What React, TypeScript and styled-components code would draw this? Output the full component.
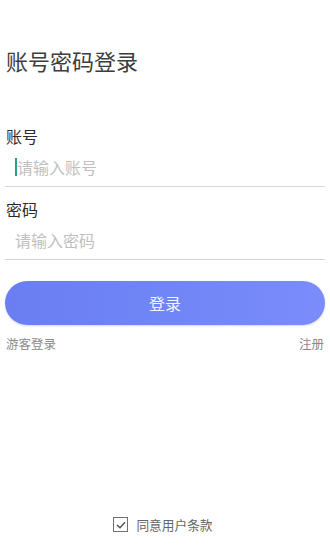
import React, { useState } from 'react'
import styled, { createGlobalStyle } from 'styled-components'

const GlobalStyle = createGlobalStyle`
    html, body {
        margin: 0;
        padding: 0;
        background: #ffffff;
    }
    body {
        font-family: "Noto Sans CJK SC", "Noto Sans", sans-serif;
    }
`

const Page = styled.div`
    display: flex;
    flex-direction: column;
    height: 550px;
    padding: 0 5px;
    box-sizing: border-box;
`

const Title = styled.h1`
    margin: 44px 0 0 1px;
    font-size: 22px;
    line-height: 32px;
    font-weight: 400;
    color: #3d3d3d;
`

const Form = styled.div`
    display: flex;
    flex-direction: column;
    margin-top: 49px;
`

const Field = styled.div`
    display: flex;
    flex-direction: column;
    border-bottom: 1px solid #d6d6d6;
    margin-bottom: 11px;
`

const Label = styled.label`
    font-size: 16px;
    line-height: 22px;
    color: #2b2b2b;
    padding-left: 1px;
`

const InputRow = styled.div`
    display: flex;
    align-items: center;
    height: 39px;
    padding-left: 10px;
`

const Cursor = styled.span`
    width: 2px;
    height: 18px;
    background: #2e9c8c;
`

const Input = styled.input`
    flex: 1;
    border: none;
    outline: none;
    background: transparent;
    padding: 0;
    font-family: inherit;
    font-size: 16px;
    color: #333;

    &::placeholder {
        color: #c0c0c0;
    }
`

const LoginButton = styled.button`
    margin-top: 10px;
    height: 44px;
    border: none;
    border-radius: 22px;
    background: linear-gradient(90deg, #6a7ef2 0%, #7085f6 50%, #7b8cfb 100%);
    color: #f4f5ff;
    font-family: inherit;
    font-size: 16px;
    box-shadow: 0 1px 2px rgba(90, 100, 200, 0.25);
    cursor: pointer;
`

const LinkRow = styled.div`
    display: flex;
    justify-content: space-between;
    margin-top: 11px;
    padding: 0 1px;
`

const SmallLink = styled.span`
    font-size: 12.5px;
    line-height: 16px;
    color: #8a8a8a;
`

const Spacer = styled.div`
    flex: 1;
`

const Agreement = styled.div`
    display: flex;
    align-items: center;
    justify-content: center;
    gap: 8px;
    margin-bottom: 16px;
    padding-right: 4px;
`

const CheckBox = styled.span`
    display: flex;
    align-items: center;
    justify-content: center;
    width: 15px;
    height: 15px;
    box-sizing: border-box;
    border: 1.5px solid #707070;
`

const AgreementText = styled.span`
    font-size: 12.7px;
    color: #666666;
`

const App: React.FC = () => {
    const [account, setAccount] = useState('')
    const [password, setPassword] = useState('')

    return (
        <>
            <GlobalStyle />
            <Page>
                <Title>账号密码登录</Title>
                <Form>
                    <Field>
                        <Label>账号</Label>
                        <InputRow>
                            <Cursor />
                            <Input
                                value={account}
                                onChange={(e) => setAccount(e.target.value)}
                                placeholder="请输入账号"
                            />
                        </InputRow>
                    </Field>
                    <Field>
                        <Label>密码</Label>
                        <InputRow>
                            <Input
                                type="password"
                                value={password}
                                onChange={(e) => setPassword(e.target.value)}
                                placeholder="请输入密码"
                            />
                        </InputRow>
                    </Field>
                    <LoginButton>登录</LoginButton>
                    <LinkRow>
                        <SmallLink>游客登录</SmallLink>
                        <SmallLink>注册</SmallLink>
                    </LinkRow>
                </Form>
                <Spacer />
                <Agreement>
                    <CheckBox>
                        <svg width="10" height="8" viewBox="0 0 10 8">
                            <path
                                d="M1 4 L4 6.8 L9 1.2"
                                fill="none"
                                stroke="#555"
                                strokeWidth="1.5"
                            />
                        </svg>
                    </CheckBox>
                    <AgreementText>同意用户条款</AgreementText>
                </Agreement>
            </Page>
        </>
    )
}

export default App
